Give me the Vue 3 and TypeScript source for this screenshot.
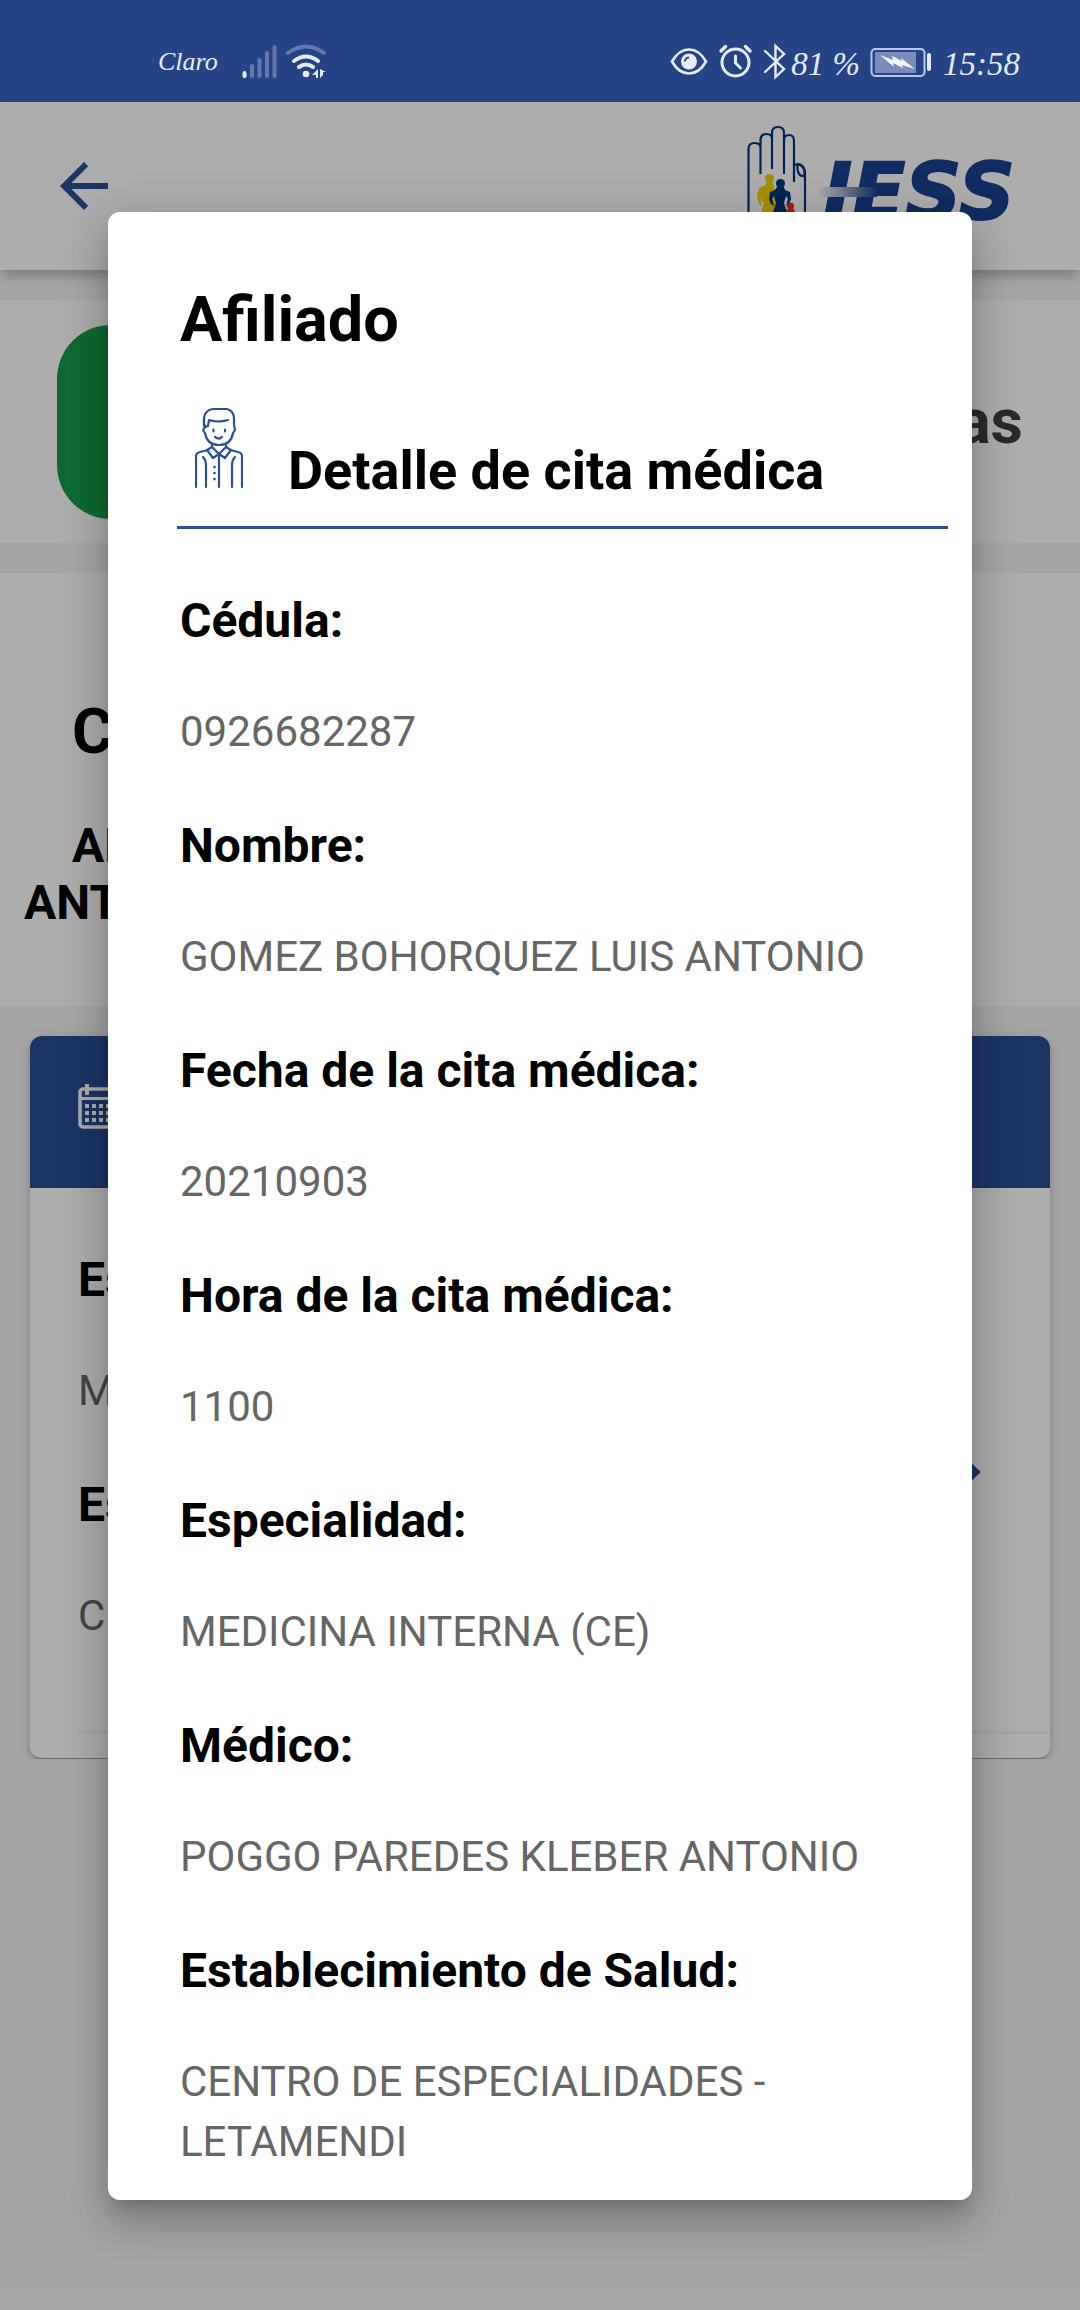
<script setup lang="ts">
interface Field {
  label: string
  value: string
}

const details: Field[] = [
  { label: 'Cédula:', value: '0926682287' },
  { label: 'Nombre:', value: 'GOMEZ BOHORQUEZ LUIS ANTONIO' },
  { label: 'Fecha de la cita médica:', value: '20210903' },
  { label: 'Hora de la cita médica:', value: '1100' },
  { label: 'Especialidad:', value: 'MEDICINA INTERNA (CE)' },
  { label: 'Médico:', value: 'POGGO PAREDES KLEBER ANTONIO' },
  { label: 'Establecimiento de Salud:', value: 'CENTRO DE ESPECIALIDADES - LETAMENDI' },
]

const summary: Field[] = [
  { label: 'Especialidad:', value: 'MEDICINA INTERNA (CE)' },
  { label: 'Establecimiento:', value: 'CENTRO DE ESPECIALIDADES' },
]

const calendarRows = [0, 1, 2]
const calendarCols = [0, 1, 2, 3, 4]
</script>

<template>
  <div class="screen">
    <div class="status">
      <span class="carrier">Claro</span>
      <svg class="signal" width="86" height="40" viewBox="240 42 86 40" fill="none" stroke-linecap="round">
        <g stroke="#6379ae" stroke-width="4">
          <path d="M252 66v10M259.500 60v16M267 53v23M274.500 47v29" />
        </g>
        <path d="M244.500 73v3" stroke="#e6ebf8" stroke-width="4" />
        <path d="M288 53q18-13 36 0" stroke="#6379ae" stroke-width="4" />
        <path d="M294 61q12-9 24 0M299 67q7-5 14 0" stroke="#e6ebf8" stroke-width="4" />
        <circle cx="306" cy="74" r="3.300" fill="#e6ebf8" />
        <path d="M318 69v9h-2v-3h-4zM320 69l6 3h-3v3l-3 3z" fill="#e6ebf8" />
      </svg>
      <span class="spacer"></span>
      <svg width="116" height="40" viewBox="669 42 116 40" fill="none" stroke="#e6ebf8">
        <path d="M671 61.500c9-16 25-16 34 0c-9 16-25 16-34 0z" stroke-width="2.600" />
        <circle cx="688" cy="61.500" r="8" fill="#e6ebf8" stroke="none" />
        <path d="M684 61.500a4 4 0 0 1 4-4" stroke="#244485" stroke-width="2" />
        <circle cx="734.500" cy="62.500" r="13.500" stroke-width="3" />
        <path d="M734.500 56v7l5 5" stroke-width="3" stroke-linecap="round" />
        <path d="M720 51l4.500-4.500M749 51l-4.500-4.500" stroke-width="3.400" stroke-linecap="round" />
        <path d="M764 51l19 18-8.500 8V46l8.500 8-19 18" stroke-width="2.400" stroke-linecap="round" />
      </svg>
      <span class="reading">81 %</span>
      <svg class="battery" width="62" height="32" viewBox="872 46 62 32">
        <rect x="873.500" y="49" width="53" height="27" rx="4" fill="none" stroke="#b9c8ec" stroke-width="2" />
        <rect x="877" y="52" width="41" height="21" fill="#7a8dba" />
        <path d="M882 55l13 5-1-4 10 5-1-3 14 11-13-4 1 3-10-5 1 4z" fill="#f2f5fc" />
        <rect x="929" y="53" width="4" height="18" rx="2" fill="#e6ebf8" />
      </svg>
      <span class="reading">15:58</span>
    </div>

    <div class="app">
      <header class="toolbar">
        <button class="back" type="button" aria-label="Volver">
          <svg width="72" height="72" viewBox="0 0 24 24" fill="#294e96">
            <path d="M20 11H7.800l5.600-5.600L12 4l-8 8 8 8 1.400-1.400L7.800 13H20z" />
          </svg>
        </button>
        <svg class="logo" width="290" height="132" viewBox="740 120 290 132" role="img" aria-label="IESS">
          <defs>
            <linearGradient id="streak">
              <stop offset="0" stop-color="#fff" />
              <stop offset="0.500" stop-color="#9aa8c4" />
              <stop offset="1" stop-color="#184293" />
            </linearGradient>
          </defs>
          <g fill="none" stroke="#00357c" stroke-width="2.200">
            <path d="M748.500 232V149q0-6 6-6t6 5v26M760.500 149v-9q0-6 6-6t5.500 6v29M772 140v-7q0-6 6-6t6 6v41M784 140q0-5 5-5t5 6v41M794 165q10-3 11 8v59" />
            <path d="M798 164c-2 8 2 13 6 12c2-5-1-11-6-12z" />
          </g>
          <g fill="#f8d200">
            <circle cx="769.500" cy="178.500" r="4.500" />
            <path d="M766 183h7l1 5 3 3-1 9 1 12v18h-15v-20l2-8-2-1-2-4 2 9-3-2-2-8 2-8 7-3z" />
          </g>
          <g fill="#00357c">
            <circle cx="780.500" cy="183.500" r="4.500" />
            <path d="M777 187h7l1 3 5 2 1 7-2 5-3 2 2-7-2-3-2 7 3 9v18h-14v-18l3-9-2-7-2 3 2 7-3-2-2-5 1-7 5-2z" />
          </g>
          <g fill="#f22c2c">
            <circle cx="790.500" cy="206" r="3.500" />
            <path d="M787 209h7l2 5-1 14h-9l-1-14z" />
          </g>
          <text x="823" y="219" class="wordmark">IESS</text>
          <rect x="817" y="187" width="60" height="10" fill="url(#streak)" />
        </svg>
      </header>

      <section class="banner">
        <button class="green" type="button" aria-label="Agendar"></button>
        <h2 class="banner-title">Citas médicas</h2>
      </section>

      <section class="member">
        <h2 class="member-title">Citas médicas</h2>
        <p class="member-name">AFILIADO: GOMEZ BOHORQUEZ<br />ANTONIO LUIS</p>
      </section>

      <div class="card-area">
        <article class="card">
          <div class="card-head">
            <svg width="48" height="46" viewBox="0 0 48 46" fill="#fff">
              <rect x="2" y="5" width="44" height="38" rx="3" fill="none" stroke="#fff" stroke-width="3.500" />
              <path d="M3 13h42v3H3zM7 0h4v11H7zM37 0h4v11h-4z" />
              <template v-for="r in calendarRows" :key="r">
                <rect v-for="c in calendarCols" :key="c" :x="7 + c * 7" :y="20 + r * 7" width="4" height="4" />
              </template>
            </svg>
          </div>
          <div class="card-body">
            <dl class="fields">
              <template v-for="f in summary" :key="f.label">
                <dt>{{ f.label }}</dt>
                <dd>{{ f.value }}</dd>
              </template>
            </dl>
            <svg width="36" height="54" viewBox="0 0 36 54" fill="none" stroke="#294e96" stroke-width="8">
              <path d="M6 4l24 23L6 50" />
            </svg>
          </div>
          <hr class="card-rule" />
        </article>
      </div>

      <div class="backdrop">
        <div class="modal" role="dialog" aria-modal="true" aria-labelledby="dialog-title">
          <h1 id="dialog-title">Afiliado</h1>
          <div class="modal-sub">
            <svg width="48" height="96" viewBox="195 406 48 96" fill="none" stroke="#2d4f93" stroke-width="2.200" stroke-linecap="round" stroke-linejoin="round">
              <path d="M206 426l-2-3v-6q1-8 9-9h14q7 2 7 10v6l1 5-2 3q-2 12-14 12t-14-12l-2-3 2-3 3-1 1-6q9 3 19 0" />
              <path d="M204 418v7M213.500 428.500v2M225 428.500v2M215 436q4 3 7 0" />
              <path d="M212 443v3l7 7 7-7v-3M212 446l-5 3 6 8 6-4 6 4 6-8-5-3" />
              <path d="M196 486v-31q0-3 4-4l8-2M242 486v-31q0-3-4-4l-8-2M203 456q3 3 3 8v22M235 456q-3 3-3 8v22M219 453v33" />
              <path d="M214.500 466v.1M214.500 472v.1M214.500 478v.1" stroke-width="2.600" />
            </svg>
            <h2>Detalle de cita médica</h2>
          </div>
          <dl class="fields modal-fields">
            <template v-for="f in details" :key="f.label">
              <dt>{{ f.label }}</dt>
              <dd>{{ f.value }}</dd>
            </template>
          </dl>
        </div>
      </div>
    </div>
  </div>
</template>

<style>
body {
  margin: 0;
}
</style>

<style scoped>
.screen {
  display: flex;
  flex-direction: column;
  min-height: 100vh;
  font-family: Roboto, "Liberation Sans", sans-serif;
  color: #000;
}
h1,
h2,
p,
dl,
dt,
dd {
  margin: 0;
}
svg {
  display: block;
  flex: none;
}
.status {
  display: flex;
  align-items: center;
  height: 80px;
  padding: 22px 60px 0 158px;
  background: #244485;
  color: #e6ebf8;
  font-family: "Liberation Serif", serif;
  font-style: italic;
  white-space: nowrap;
}
.carrier {
  font-size: 26px;
}
.signal {
  margin-left: 22px;
}
.spacer {
  flex: 1;
}
.reading {
  font-size: 33px;
  padding: 4px 0 0 5px;
}
.battery {
  margin: 0 6px 0 10px;
}
.app {
  position: relative;
  flex: 1;
  background: #f4f4f4;
}
.toolbar {
  position: relative;
  display: flex;
  align-items: center;
  justify-content: space-between;
  height: 168px;
  padding: 0 50px 0 48px;
  background: #fff;
  box-shadow: 0 6px 12px -3px rgba(0, 0, 0, 0.2), 0 6px 15px rgba(0, 0, 0, 0.12);
}
.back {
  padding: 0;
  border: 0;
  background: none;
}
.wordmark {
  font: italic bold 78px "DejaVu Sans", sans-serif;
  fill: #184293;
  stroke: #184293;
  stroke-width: 2px;
}
.banner {
  display: flex;
  align-items: center;
  justify-content: space-between;
  height: 243px;
  margin-top: 30px;
  padding: 0 57px;
  box-sizing: border-box;
  background: #fff;
}
.green {
  width: 30%;
  height: 194px;
  border: 0;
  border-radius: 54px;
  background: #169d47;
}
.banner-title {
  color: #3e3e3e;
  font-size: 63px;
  line-height: 78px;
}
.member {
  margin-top: 30px;
  padding: 120px 24px 75px;
  background: #fff;
}
.member-title {
  padding-left: 48px;
  font-size: 63px;
  line-height: 78px;
}
.member-name {
  margin-top: 46px;
  text-indent: 48px;
  font-size: 48px;
  font-weight: 700;
  line-height: 57px;
}
.card-area {
  padding: 30px 30px 1px;
  overflow: hidden;
}
.card {
  padding-bottom: 24px;
  border-radius: 12px;
  background: #fff;
  box-shadow: 0 9px 3px -6px rgba(0, 0, 0, 0.2), 0 6px 6px rgba(0, 0, 0, 0.14), 0 3px 15px rgba(0, 0, 0, 0.12);
}
.card-head {
  height: 104px;
  padding: 48px 48px 0;
  border-radius: 12px 12px 0 0;
  background: #294e96;
}
.card-body {
  display: flex;
  align-items: center;
  justify-content: space-between;
  padding: 62px 69px 85px 48px;
}
.card-body svg {
  margin-top: 48px;
}
.card-rule {
  height: 3px;
  margin: 0 0 0 48px;
  border: 0;
  background: #f4f4f4;
}
.fields dt {
  font-size: 48px;
  font-weight: 700;
  line-height: 60px;
}
.fields dd {
  margin-top: 51px;
  color: #666;
  font-size: 42px;
  line-height: 60px;
}
.fields dd + dt {
  margin-top: 54px;
}
.backdrop {
  position: absolute;
  inset: 0;
  display: flex;
  align-items: center;
  justify-content: center;
  background: rgba(0, 0, 0, 0.32);
}
.modal {
  width: 80%;
  box-sizing: border-box;
  padding: 69px 24px 28px 69px;
  border-radius: 12px;
  background: #fff;
  box-shadow: 0 11px 15px -7px rgba(0, 0, 0, 0.2), 0 24px 38px 3px rgba(0, 0, 0, 0.14), 0 9px 46px 8px rgba(0, 0, 0, 0.12);
}
.modal h1 {
  padding-left: 3px;
  font-size: 63px;
  line-height: 78px;
}
.modal-sub {
  display: flex;
  align-items: flex-end;
  gap: 45px;
  margin-top: 48px;
  padding: 0 0 23px 18px;
  border-bottom: 3px solid #2d4f93;
}
.modal-sub h2 {
  font-size: 54px;
  line-height: 64px;
}
.modal-fields {
  margin-top: 62px;
  padding-left: 3px;
}
</style>
